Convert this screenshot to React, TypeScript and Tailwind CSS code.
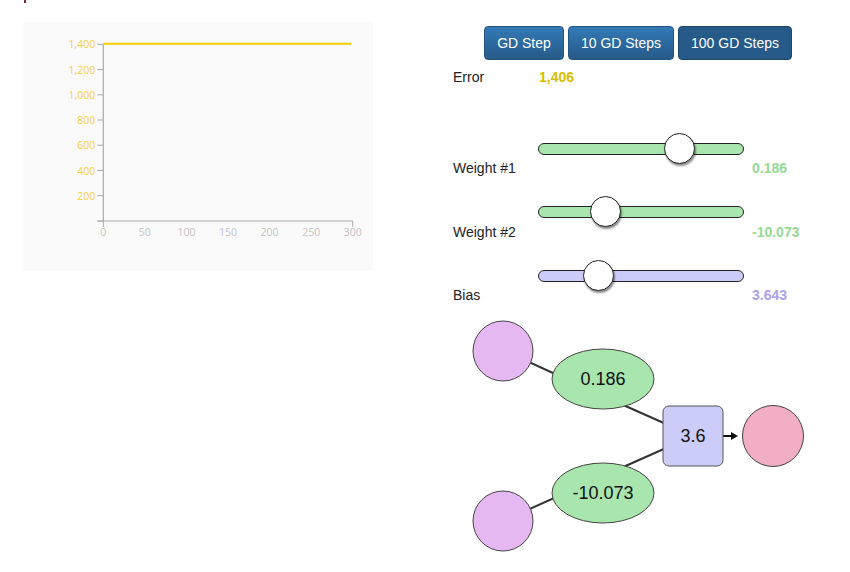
import React from "react";

const font = { fontFamily: '"Liberation Sans", Arial, sans-serif' };

const yTicks = [1400, 1200, 1000, 800, 600, 400, 200];
const xTicks = [0, 50, 100, 150, 200, 250, 300];

const ErrorChart: React.FC = () => {
  // chart coords in panel space (panel starts at 23,22)
  const x0 = 80.3;
  const x1 = 329.7;
  const yBottom = 199;
  const yTop = 22.3;
  const yScale = (v: number) => yBottom - (v / 1400) * (yBottom - yTop);
  const xScale = (v: number) => x0 + (v / 300) * (x1 - x0);
  return (
    <svg width={350} height={249} style={{ fontFamily: '"Open Sans", sans-serif' }}>
      {yTicks.map((t) => (
        <g key={t}>
          <line x1={x0 - 6} x2={x0} y1={yScale(t)} y2={yScale(t)} stroke="#aaa" strokeWidth={1} />
          <text x={x0 - 8} y={yScale(t) + 4} textAnchor="end" fontSize={10.5} fill="#f7d03a">
            {t.toLocaleString("en-US")}
          </text>
        </g>
      ))}
      <line x1={x0 - 6} x2={x0} y1={yBottom} y2={yBottom} stroke="#aaa" />
      <line x1={x0} x2={x0} y1={yTop} y2={yBottom} stroke="#aaa" strokeWidth={1.2} />
      <line x1={x0 - 6} x2={x1 + 0.5} y1={yBottom} y2={yBottom} stroke="#aaa" strokeWidth={1.2} />
      <line x1={x0} x2={x0} y1={yBottom} y2={yBottom + 6} stroke="#aaa" />
      <line x1={x1} x2={x1} y1={yBottom} y2={yBottom + 6} stroke="#aaa" />
      {xTicks.map((t) => (
        <text key={t} x={xScale(t)} y={yBottom + 15} textAnchor="middle" fontSize={10.5} fill="#c4c4c4">
          {t}
        </text>
      ))}
      <line x1={x0} x2={x1 - 1.5} y1={21.7} y2={21.7} stroke="#f4cc00" strokeWidth={2} />
    </svg>
  );
};

type SliderProps = { track: string; thumbLeft: number };

const Slider: React.FC<SliderProps> = ({ track, thumbLeft }) => (
  <div className="relative ml-[85px] w-[206px] h-[31px] flex items-center">
    <div className={`w-full h-[12px] rounded-full border border-[#222] ${track}`} />
    <div
      className="absolute top-0 w-[31px] h-[31px] rounded-full bg-white border border-[#222] shadow-[1px_2px_2px_rgba(0,0,0,0.45)]"
      style={{ left: thumbLeft }}
    />
  </div>
);

const App: React.FC = () => {
  return (
    <div className="w-[850px] h-[572px] bg-white overflow-hidden text-[#222]" style={font}>
      <div className="h-[3px]">
        <div className="ml-[24px] w-[2px] h-[3px] bg-[#7a2a4a]" />
      </div>
      <div className="flex">
        <div className="ml-[23px] mt-[19px] w-[350px] h-[249px] bg-[#fafafa]">
          <ErrorChart />
        </div>

        <div className="ml-[80px] mt-[23px] w-[370px] flex flex-col">
          <div className="pl-[31px] flex gap-[4px] h-[34px] text-[14px] text-white">
            <button className="w-[80px] h-[34px] rounded-[4px] border border-[#245580] bg-gradient-to-b from-[#337ab7] to-[#265a88]">
              GD Step
            </button>
            <button className="w-[106px] h-[34px] rounded-[4px] border border-[#245580] bg-gradient-to-b from-[#337ab7] to-[#265a88]">
              10 GD Steps
            </button>
            <button className="w-[114px] h-[34px] rounded-[4px] border border-[#1d456a] bg-[#265a88]">
              100 GD Steps
            </button>
          </div>

          <div className="mt-[7px] h-[20px] flex items-center text-[14px]">
            <div className="w-[86px]">Error</div>
            <div className="font-bold text-[#d7bd00]">1,406</div>
          </div>

          <div className="mt-[46px]">
            <Slider track="bg-[#a8e6ad]" thumbLeft={126} />
          </div>
          <div className="mt-[-6px] h-[20px] flex items-center text-[14px]">
            <div className="w-[299px]">Weight #1</div>
            <div className="font-bold text-[#95d995]">0.186</div>
          </div>

          <div className="mt-[18px]">
            <Slider track="bg-[#a8e6ad]" thumbLeft={52} />
          </div>
          <div className="mt-[-5px] h-[20px] flex items-center text-[14px]">
            <div className="w-[299px]">Weight #2</div>
            <div className="font-bold text-[#95d995]">-10.073</div>
          </div>

          <div className="mt-[18px]">
            <Slider track="bg-[#ccccf8]" thumbLeft={45} />
          </div>
          <div className="mt-[-6px] h-[20px] flex items-center text-[14px]">
            <div className="w-[299px]">Bias</div>
            <div className="font-bold text-[#aaa2ee]">3.643</div>
          </div>

          <svg width={360} height={240} viewBox="453 316 360 240" className="mt-[11px]">
            <polyline points="503,350 603,396 693,436" fill="none" stroke="#333" strokeWidth={2} />
            <polyline points="503,521 603,476 693,436" fill="none" stroke="#333" strokeWidth={2} />
            <line x1={723} x2={733} y1={436} y2={436} stroke="#111" strokeWidth={2} />
            <polygon points="731,432 738,436 731,440" fill="#111" />
            <circle cx={503} cy={351} r={30} fill="#e6b8f1" stroke="#444" strokeWidth={1} />
            <circle cx={503} cy={521} r={30} fill="#e6b8f1" stroke="#444" strokeWidth={1} />
            <ellipse cx={603} cy={379} rx={51} ry={30} fill="#a8e6ad" stroke="#444" strokeWidth={1} />
            <ellipse cx={603} cy={493} rx={51} ry={30} fill="#a8e6ad" stroke="#444" strokeWidth={1} />
            <rect x={663} y={406} width={60} height={60} rx={6} fill="#ccccf8" stroke="#555" strokeWidth={1} />
            <circle cx={773} cy={436} r={30.5} fill="#f2aec5" stroke="#444" strokeWidth={1} />
            <g fontSize={18} textAnchor="middle" fill="#111" style={font}>
              <text x={603} y={385}>0.186</text>
              <text x={603} y={499}>-10.073</text>
              <text x={693} y={442}>3.6</text>
            </g>
          </svg>
        </div>
      </div>
    </div>
  );
};

export default App;
